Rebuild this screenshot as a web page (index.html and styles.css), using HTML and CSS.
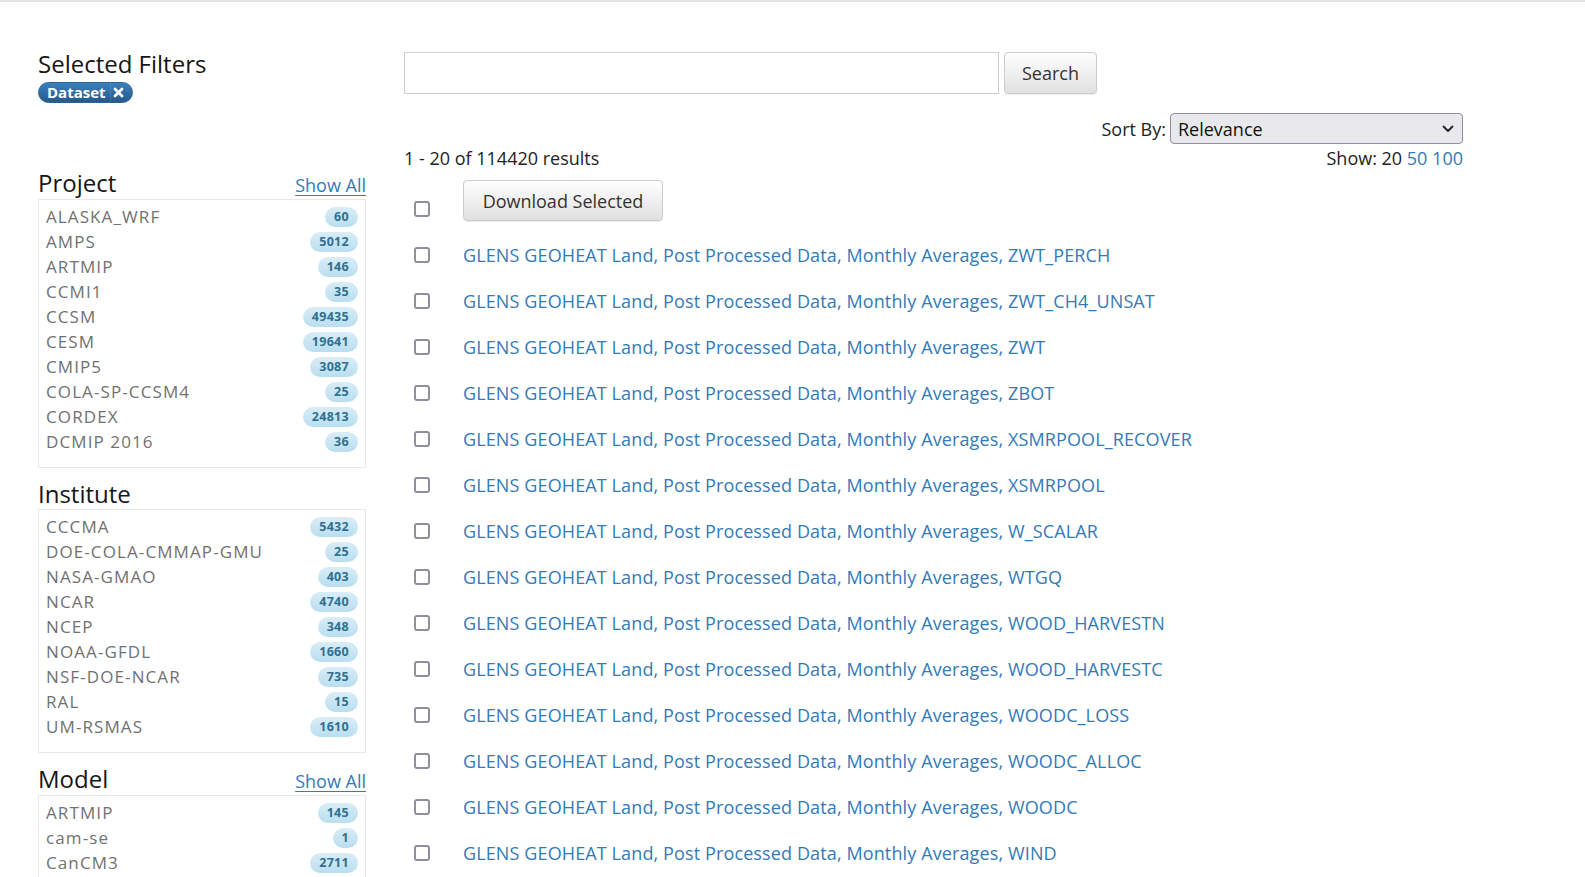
FILE: index.html
```html
<!DOCTYPE html>
<html lang="en">
<head>
<meta charset="utf-8">
<title>Search</title>
<link rel="stylesheet" href="styles.css">
</head>
<body>
<div class="topbar"></div>
<div class="page">
  <aside class="sidebar">
    <h4 class="sel-title">Selected Filters</h4>
    <span class="chip">Dataset<span class="chip-x"><svg width="11" height="11" viewBox="0 0 11 11"><path d="M2 2 L9 9 M9 2 L2 9" stroke="#fff" stroke-width="2.8" stroke-linecap="round"/></svg></span></span>

    <section class="facet first">
      <div class="facet-head"><h4>Project</h4><a href="#" class="show-all">Show All</a></div>
      <ul class="facet-box">
        <li><span>ALASKA_WRF</span><b class="count">60</b></li>
        <li><span>AMPS</span><b class="count">5012</b></li>
        <li><span>ARTMIP</span><b class="count">146</b></li>
        <li><span>CCMI1</span><b class="count">35</b></li>
        <li><span>CCSM</span><b class="count">49435</b></li>
        <li><span>CESM</span><b class="count">19641</b></li>
        <li><span>CMIP5</span><b class="count">3087</b></li>
        <li><span>COLA-SP-CCSM4</span><b class="count">25</b></li>
        <li><span>CORDEX</span><b class="count">24813</b></li>
        <li><span>DCMIP 2016</span><b class="count">36</b></li>
      </ul>
    </section>

    <section class="facet">
      <div class="facet-head"><h4>Institute</h4></div>
      <ul class="facet-box">
        <li><span>CCCMA</span><b class="count">5432</b></li>
        <li><span>DOE-COLA-CMMAP-GMU</span><b class="count">25</b></li>
        <li><span>NASA-GMAO</span><b class="count">403</b></li>
        <li><span>NCAR</span><b class="count">4740</b></li>
        <li><span>NCEP</span><b class="count">348</b></li>
        <li><span>NOAA-GFDL</span><b class="count">1660</b></li>
        <li><span>NSF-DOE-NCAR</span><b class="count">735</b></li>
        <li><span>RAL</span><b class="count">15</b></li>
        <li><span>UM-RSMAS</span><b class="count">1610</b></li>
      </ul>
    </section>

    <section class="facet">
      <div class="facet-head"><h4>Model</h4><a href="#" class="show-all">Show All</a></div>
      <ul class="facet-box">
        <li><span>ARTMIP</span><b class="count">145</b></li>
        <li><span>cam-se</span><b class="count">1</b></li>
        <li><span>CanCM3</span><b class="count">2711</b></li>
      </ul>
    </section>
  </aside>

  <main class="results">
    <form class="search-row">
      <input type="text" class="search-input">
      <button type="button" class="btn search-btn">Search</button>
    </form>

    <div class="sort-row">
      <label class="sort-label">Sort By:</label>
      <div class="select-wrap">
        <select class="sort-select"><option>Relevance</option></select>
        <svg class="chev" width="12" height="8" viewBox="0 0 12 8"><path d="M1.5 1.5 L6 6 L10.5 1.5" fill="none" stroke="#222" stroke-width="1.8" stroke-linecap="round" stroke-linejoin="round"/></svg>
      </div>
    </div>

    <div class="count-row">
      <span class="total">1 - 20 of 114420 results</span>
      <span class="per-page">Show: 20 <a href="#">50</a> <a href="#">100</a></span>
    </div>

    <div class="download-row">
      <input type="checkbox" class="cb">
      <button type="button" class="btn dl-btn">Download Selected</button>
    </div>

    <ul class="result-list">
      <li><input type="checkbox" class="cb"><a href="#">GLENS GEOHEAT Land, Post Processed Data, Monthly Averages, ZWT_PERCH</a></li>
      <li><input type="checkbox" class="cb"><a href="#">GLENS GEOHEAT Land, Post Processed Data, Monthly Averages, ZWT_CH4_UNSAT</a></li>
      <li><input type="checkbox" class="cb"><a href="#">GLENS GEOHEAT Land, Post Processed Data, Monthly Averages, ZWT</a></li>
      <li><input type="checkbox" class="cb"><a href="#">GLENS GEOHEAT Land, Post Processed Data, Monthly Averages, ZBOT</a></li>
      <li><input type="checkbox" class="cb"><a href="#">GLENS GEOHEAT Land, Post Processed Data, Monthly Averages, XSMRPOOL_RECOVER</a></li>
      <li><input type="checkbox" class="cb"><a href="#">GLENS GEOHEAT Land, Post Processed Data, Monthly Averages, XSMRPOOL</a></li>
      <li><input type="checkbox" class="cb"><a href="#">GLENS GEOHEAT Land, Post Processed Data, Monthly Averages, W_SCALAR</a></li>
      <li><input type="checkbox" class="cb"><a href="#">GLENS GEOHEAT Land, Post Processed Data, Monthly Averages, WTGQ</a></li>
      <li><input type="checkbox" class="cb"><a href="#">GLENS GEOHEAT Land, Post Processed Data, Monthly Averages, WOOD_HARVESTN</a></li>
      <li><input type="checkbox" class="cb"><a href="#">GLENS GEOHEAT Land, Post Processed Data, Monthly Averages, WOOD_HARVESTC</a></li>
      <li><input type="checkbox" class="cb"><a href="#">GLENS GEOHEAT Land, Post Processed Data, Monthly Averages, WOODC_LOSS</a></li>
      <li><input type="checkbox" class="cb"><a href="#">GLENS GEOHEAT Land, Post Processed Data, Monthly Averages, WOODC_ALLOC</a></li>
      <li><input type="checkbox" class="cb"><a href="#">GLENS GEOHEAT Land, Post Processed Data, Monthly Averages, WOODC</a></li>
      <li><input type="checkbox" class="cb"><a href="#">GLENS GEOHEAT Land, Post Processed Data, Monthly Averages, WIND</a></li>
    </ul>
  </main>
</div>
</body>
</html>
```

FILE: styles.css
```css
* { box-sizing: border-box; }

html, body {
  margin: 0;
  padding: 0;
  background: #fff;
}

body {
  font-family: "Open Sans", "Liberation Sans", sans-serif;
  font-size: 18px;
  color: #222;
  overflow: hidden;
}

a { color: #337ab7; text-decoration: none; }

.topbar {
  height: 2px;
  background: #e2e2e2;
  box-shadow: 0 2px 5px rgba(0, 0, 0, 0.06);
}

.page {
  display: flex;
  align-items: flex-start;
  gap: 38px;
  padding: 0 38px;
}

/* ---------- sidebar ---------- */
.sidebar {
  width: 328px;
  flex: none;
  display: flex;
  flex-direction: column;
  align-items: flex-start;
}

h4 {
  margin: 0;
  font-size: 24px;
  font-weight: 400;
  line-height: 26px;
  color: #161616;
}

.sel-title { margin-top: 49px; }

.chip {
  margin-top: 5px;
  height: 21px;
  display: inline-flex;
  align-items: center;
  gap: 4px;
  padding: 0 8px 0 8px;
  border-radius: 11px;
  background: linear-gradient(#3a80bd, #25598a);
  border: 1px solid #2a629a;
  color: #fff;
  font-weight: 700;
  font-size: 15px;
  line-height: 1;
}

.chip-x {
  display: inline-flex;
  align-items: center;
  padding-left: 2px;
  border-left: 1px solid rgba(255, 255, 255, 0.12);
  height: 100%;
}

.facet { width: 100%; margin-top: 13px; }
.facet.first { margin-top: 67px; }

.facet-head {
  display: flex;
  justify-content: space-between;
  align-items: baseline;
  margin-bottom: 2px;
}

.show-all {
  font-size: 18px;
  text-decoration: underline;
  text-underline-offset: 3px;
}

.facet-box {
  list-style: none;
  margin: 0;
  padding: 4px 7px 13px 7px;
  border: 1px solid #e9e9e9;
}

.facet-box li {
  display: flex;
  justify-content: space-between;
  align-items: center;
  height: 25px;
  font-size: 17px;
  letter-spacing: 1.1px;
  color: #717171;
}

.count {
  height: 20px;
  display: inline-flex;
  align-items: center;
  padding: 0 9px;
  border-radius: 10px;
  background: linear-gradient(#d9edf7, #b9def0);
  color: #31708f;
  font-size: 12.5px;
  font-weight: 700;
  letter-spacing: 0.3px;
}

/* ---------- results ---------- */
.results {
  width: 1059px;
  flex: none;
}

.search-row {
  display: flex;
  gap: 5px;
  margin: 50px 0 0 0;
}

.search-input {
  width: 595px;
  height: 42px;
  border: 1px solid #cfcfcf;
  border-radius: 0;
  font: inherit;
}

.btn {
  font-family: inherit;
  font-size: 18px;
  color: #333;
  background: linear-gradient(#ffffff, #e0e0e0);
  border: 1px solid #cccccc;
  border-radius: 4px;
  box-shadow: 0 1px 1px rgba(0, 0, 0, 0.075);
  padding: 0;
}

.search-btn { width: 93px; height: 42px; }

.sort-row {
  display: flex;
  justify-content: flex-end;
  align-items: center;
  gap: 4px;
  margin-top: 19px;
}

.sort-label { font-size: 18px; color: #222; }

.select-wrap { position: relative; }

.sort-select {
  appearance: none;
  -webkit-appearance: none;
  width: 293px;
  height: 31px;
  border: 1px solid #8f8f9d;
  border-radius: 4px;
  background: #e9e9ed;
  font-family: inherit;
  font-size: 18px;
  color: #111;
  padding: 0 7px;
}

.chev {
  position: absolute;
  right: 9px;
  top: 12px;
  pointer-events: none;
}

.count-row {
  display: flex;
  justify-content: space-between;
  line-height: 26px;
  margin-top: 1px;
}

.download-row {
  display: flex;
  align-items: flex-end;
  gap: 33px;
  margin-top: 9px;
  padding-left: 10px;
}

.dl-btn { width: 200px; height: 41px; }
.download-row .cb { margin-bottom: 4px; }

.cb {
  appearance: none;
  -webkit-appearance: none;
  width: 16px;
  height: 16px;
  margin: 0;
  flex: none;
  border: 2px solid #8f8f9d;
  border-radius: 3px;
  background: #fff;
}

.result-list {
  list-style: none;
  margin: 11px 0 0 0;
  padding: 0 0 0 10px;
}

.result-list li {
  display: flex;
  align-items: center;
  gap: 33px;
  height: 46px;
}

.result-list a { font-size: 18px; letter-spacing: 0.12px; }
```
